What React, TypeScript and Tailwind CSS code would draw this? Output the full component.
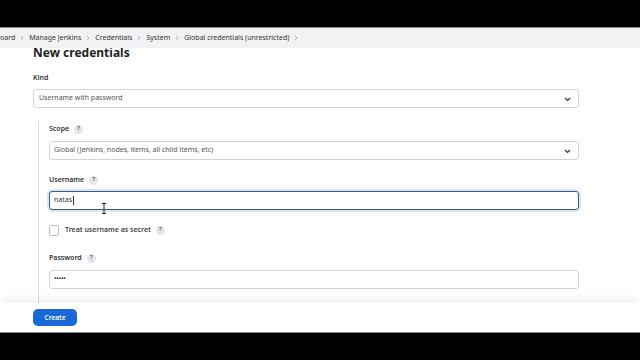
import React from 'react';

function Help() {
  return (
    <span className="ml-[5px] inline-flex h-[9px] w-[9px] items-center justify-center rounded-full bg-[#e6e6ea] text-[5.5px] font-bold leading-none text-[#555]">
      ?
    </span>
  );
}

function Chevron() {
  return (
    <svg width="7" height="5" viewBox="0 0 7 5" className="absolute right-[7px] top-[7px]">
      <polyline points="1,1 3.5,3.5 6,1" fill="none" stroke="#333" strokeWidth="1.2" />
    </svg>
  );
}

function Sep() {
  return (
    <svg width="4" height="6" viewBox="0 0 4 6" className="mx-[5px]">
      <polyline points="1,1 3,3 1,5" fill="none" stroke="#a3a3a8" strokeWidth="0.8" />
    </svg>
  );
}

function Label({ text, help = true }: { text: string; help?: boolean }) {
  return (
    <div className="flex h-[10px] items-center text-[7px] font-semibold leading-[10px] text-[#333]">
      <span>{text}</span>
      {help && <Help />}
    </div>
  );
}

export default function App() {
  const crumbs = ['Manage Jenkins', 'Credentials', 'System', 'Global credentials (unrestricted)'];
  return (
    <div
      className="flex h-[360px] w-[640px] flex-col bg-black"
      style={{ fontFamily: '"Noto Sans", "Open Sans", sans-serif' }}
    >
      <div className="h-[27px]" />
      <div className="relative flex h-[305px] flex-col overflow-hidden border-t border-[#8a8a8a] bg-white">
        {/* breadcrumb bar */}
        <div className="relative z-10 flex h-[20px] shrink-0 items-center bg-[#f2f2f4] text-[7px] text-[#333]">
          <span className="-ml-[21px]">Dashboard</span>
          <Sep />
          {crumbs.map((c) => (
            <React.Fragment key={c}>
              <span>{c}</span>
              <Sep />
            </React.Fragment>
          ))}
        </div>

        {/* form */}
        <div className="flex-1 overflow-hidden pl-[33px] pr-[61px]">
          <h1 className="-mt-[3px] text-[12px] font-bold leading-[16px] text-[#1f1f23]">New credentials</h1>

          <div className="mt-[12px]">
            <Label text="Kind" help={false} />
          </div>
          <div className="relative mt-[6px] flex h-[19px] items-center rounded-[3px] border border-[#d4d4d8] pl-[5px] text-[7px] text-[#555]">
            Username with password
            <Chevron />
          </div>

          <div className="ml-[5px] mt-[13px] border-l border-[#d9d9dd] pl-[10px] pt-[3px]">
            <Label text="Scope" />
            <div className="relative mt-[7px] flex h-[19px] items-center rounded-[3px] border border-[#d4d4d8] pl-[4px] text-[7px] text-[#555]">
              Global (Jenkins, nodes, items, all child items, etc)
              <Chevron />
            </div>

            <div className="mt-[15px]">
              <Label text="Username" />
            </div>
            <div className="relative mt-[6px] flex h-[19px] items-center rounded-[3px] border-[1.5px] border-[#3f5a78] pl-[4px] text-[7px] text-[#333] shadow-[0_0_0_2px_rgba(140,185,230,0.35)]">
              natas
              <span className="ml-[1px] h-[9px] w-px bg-[#333]" />
              <svg width="6" height="11" viewBox="0 0 6 11" className="absolute left-[51px] top-[11px]">
                <path d="M1 0.5 H5 M3 0.5 V10.5 M1 10.5 H5" fill="none" stroke="#222" strokeWidth="1" />
              </svg>
            </div>

            <div className="mt-[14px] flex h-[12px] items-center">
              <span className="h-[11px] w-[10px] rounded-[2px] border border-[#bdbdc2] bg-white" />
              <span className="ml-[6px] text-[7px] font-semibold text-[#444]">Treat username as secret</span>
              <Help />
            </div>

            <div className="mt-[17px]">
              <Label text="Password" />
            </div>
            <div className="mt-[7px] flex h-[19px] items-center rounded-[3px] border border-[#d4d4d8] pl-[4px] text-[7px] tracking-[-0.3px] text-[#333]">
              •••••
            </div>
            <div className="h-[20px]" />
          </div>
        </div>

        {/* bottom bar */}
        <div className="relative z-10 flex h-[29px] shrink-0 items-center bg-white pl-[33px] shadow-[0_-6px_10px_-2px_rgba(0,0,0,0.06)]">
          <button className="flex h-[17px] w-[44px] items-center justify-center rounded-[5px] bg-[#1b68d8] text-[6.5px] font-semibold text-white">
            Create
          </button>
        </div>
      </div>
      <div className="h-[28px] border-t border-[#8a8a8a]" />
    </div>
  );
}
